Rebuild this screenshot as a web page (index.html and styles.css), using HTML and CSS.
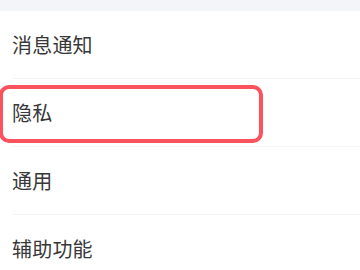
FILE: index.html
```html
<!DOCTYPE html>
<html lang="zh">
<head>
<meta charset="utf-8">
<link rel="stylesheet" href="styles.css">
</head>
<body>
<div class="top-strip"></div>
<ul class="menu">
  <li class="row"><span class="label">消息通知</span></li>
  <li class="row active"><span class="label">隐私</span><span class="highlight"></span></li>
  <li class="row"><span class="label">通用</span></li>
  <li class="row"><span class="label">辅助功能</span></li>
</ul>
</body>
</html>
```
FILE: styles.css
```css
html, body {
  margin: 0;
  padding: 0;
  background: #ffffff;
  width: 360px;
  height: 270px;
  overflow: hidden;
  font-family: "Noto Sans CJK SC", "Noto Sans", sans-serif;
}
.top-strip {
  height: 11px;
  background: #f4f5f9;
}
.menu {
  list-style: none;
  margin: 0;
  padding: 0;
}
.row {
  position: relative;
  height: 67px;
  display: flex;
  align-items: center;
  padding-left: 12px;
  border-bottom: 1px solid transparent;
}
.row::after {
  content: "";
  position: absolute;
  left: 12px;
  right: 0;
  bottom: -1px;
  height: 1px;
  background: #f5f5f7;
}
.label {
  font-size: 20px;
  line-height: 1;
  color: #383838;
  letter-spacing: 0.2px;
}
.highlight {
  position: absolute;
  top: 6px;
  left: -1px;
  width: 264px;
  height: 58px;
  box-sizing: border-box;
  border: 4.5px solid #fa535e;
  border-radius: 10px;
  pointer-events: none;
}
```
